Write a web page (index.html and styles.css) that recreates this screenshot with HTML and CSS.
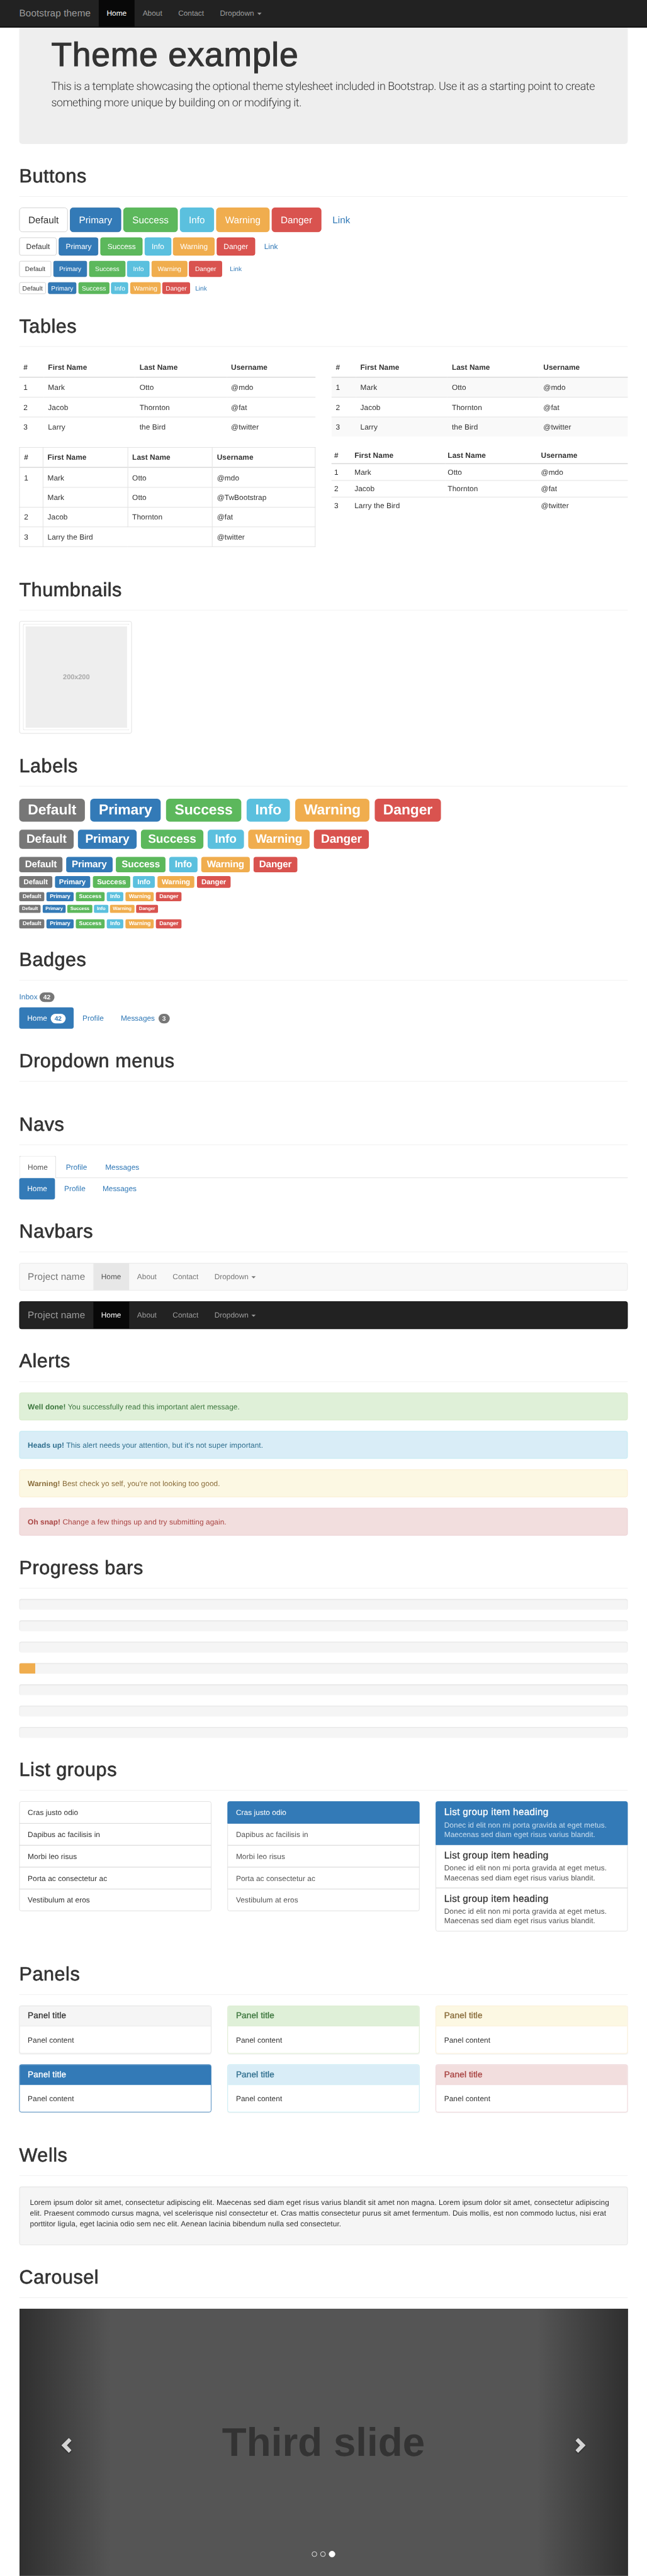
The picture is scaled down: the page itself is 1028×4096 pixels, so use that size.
FILE: index.html
```html
<!DOCTYPE html>
<html lang="en">
<head>
<meta charset="utf-8">
<title>Theme Template for Bootstrap</title>
<link rel="stylesheet" href="styles.css">
</head>
<body>
<div class="viewport">
<div class="page">
<nav class="navbar navbar-inverse navbar-fixed-top">
  <div class="container navbar-row">
    <a class="navbar-brand">Bootstrap theme</a>
    <ul class="navbar-nav">
      <li class="active"><a>Home</a></li>
      <li><a>About</a></li>
      <li><a>Contact</a></li>
      <li><a>Dropdown <span class="caret"></span></a></li>
    </ul>
  </div>
</nav>

<main class="container theme-showcase">
  <div class="jumbotron">
    <h1>Theme example</h1>
    <p>This is a template showcasing the optional theme stylesheet included in Bootstrap. Use it as a starting point to create<br>something more unique by building on or modifying it.</p>
  </div>

  <div class="page-header"><h1>Buttons</h1></div>
  <p class="buttons">
    <button class="btn btn-lg btn-default">Default</button>
    <button class="btn btn-lg btn-primary">Primary</button>
    <button class="btn btn-lg btn-success">Success</button>
    <button class="btn btn-lg btn-info">Info</button>
    <button class="btn btn-lg btn-warning">Warning</button>
    <button class="btn btn-lg btn-danger">Danger</button>
    <button class="btn btn-lg btn-link">Link</button>
  </p>
  <p class="buttons">
    <button class="btn btn-default">Default</button>
    <button class="btn btn-primary">Primary</button>
    <button class="btn btn-success">Success</button>
    <button class="btn btn-info">Info</button>
    <button class="btn btn-warning">Warning</button>
    <button class="btn btn-danger">Danger</button>
    <button class="btn btn-link">Link</button>
  </p>
  <p class="buttons">
    <button class="btn btn-sm btn-default">Default</button>
    <button class="btn btn-sm btn-primary">Primary</button>
    <button class="btn btn-sm btn-success">Success</button>
    <button class="btn btn-sm btn-info">Info</button>
    <button class="btn btn-sm btn-warning">Warning</button>
    <button class="btn btn-sm btn-danger">Danger</button>
    <button class="btn btn-sm btn-link">Link</button>
  </p>
  <p class="buttons">
    <button class="btn btn-xs btn-default">Default</button>
    <button class="btn btn-xs btn-primary">Primary</button>
    <button class="btn btn-xs btn-success">Success</button>
    <button class="btn btn-xs btn-info">Info</button>
    <button class="btn btn-xs btn-warning">Warning</button>
    <button class="btn btn-xs btn-danger">Danger</button>
    <button class="btn btn-xs btn-link">Link</button>
  </p>

  <div class="page-header"><h1>Tables</h1></div>
  <div class="row cols-2">
    <table class="table table-plain">
      <thead><tr><th>#</th><th>First Name</th><th>Last Name</th><th>Username</th></tr></thead>
      <tbody>
        <tr><td>1</td><td>Mark</td><td>Otto</td><td>@mdo</td></tr>
        <tr><td>2</td><td>Jacob</td><td>Thornton</td><td>@fat</td></tr>
        <tr><td>3</td><td>Larry</td><td>the Bird</td><td>@twitter</td></tr>
      </tbody>
    </table>
    <table class="table table-plain table-striped">
      <thead><tr><th>#</th><th>First Name</th><th>Last Name</th><th>Username</th></tr></thead>
      <tbody>
        <tr><td>1</td><td>Mark</td><td>Otto</td><td>@mdo</td></tr>
        <tr><td>2</td><td>Jacob</td><td>Thornton</td><td>@fat</td></tr>
        <tr><td>3</td><td>Larry</td><td>the Bird</td><td>@twitter</td></tr>
      </tbody>
    </table>
  </div>
  <div class="row cols-2">
    <table class="table table-bordered">
      <thead><tr><th>#</th><th>First Name</th><th>Last Name</th><th>Username</th></tr></thead>
      <tbody>
        <tr><td rowspan="2">1</td><td>Mark</td><td>Otto</td><td>@mdo</td></tr>
        <tr><td>Mark</td><td>Otto</td><td>@TwBootstrap</td></tr>
        <tr><td>2</td><td>Jacob</td><td>Thornton</td><td>@fat</td></tr>
        <tr><td>3</td><td colspan="2">Larry the Bird</td><td>@twitter</td></tr>
      </tbody>
    </table>
    <table class="table table-condensed">
      <thead><tr><th>#</th><th>First Name</th><th>Last Name</th><th>Username</th></tr></thead>
      <tbody>
        <tr><td>1</td><td>Mark</td><td>Otto</td><td>@mdo</td></tr>
        <tr><td>2</td><td>Jacob</td><td>Thornton</td><td>@fat</td></tr>
        <tr><td>3</td><td colspan="2">Larry the Bird</td><td>@twitter</td></tr>
      </tbody>
    </table>
  </div>

  <div class="page-header"><h1>Thumbnails</h1></div>
  <div class="img-thumbnail"><div class="thumb-frame"><div class="thumb-fill">200x200</div></div></div>

  <div class="page-header"><h1>Labels</h1></div>
  <h1 class="labels">
    <span class="label label-default">Default</span>
    <span class="label label-primary">Primary</span>
    <span class="label label-success">Success</span>
    <span class="label label-info">Info</span>
    <span class="label label-warning">Warning</span>
    <span class="label label-danger">Danger</span>
  </h1>
  <h2 class="labels">
    <span class="label label-default">Default</span>
    <span class="label label-primary">Primary</span>
    <span class="label label-success">Success</span>
    <span class="label label-info">Info</span>
    <span class="label label-warning">Warning</span>
    <span class="label label-danger">Danger</span>
  </h2>
  <h3 class="labels">
    <span class="label label-default">Default</span>
    <span class="label label-primary">Primary</span>
    <span class="label label-success">Success</span>
    <span class="label label-info">Info</span>
    <span class="label label-warning">Warning</span>
    <span class="label label-danger">Danger</span>
  </h3>
  <h4 class="labels">
    <span class="label label-default">Default</span>
    <span class="label label-primary">Primary</span>
    <span class="label label-success">Success</span>
    <span class="label label-info">Info</span>
    <span class="label label-warning">Warning</span>
    <span class="label label-danger">Danger</span>
  </h4>
  <h5 class="labels">
    <span class="label label-default">Default</span>
    <span class="label label-primary">Primary</span>
    <span class="label label-success">Success</span>
    <span class="label label-info">Info</span>
    <span class="label label-warning">Warning</span>
    <span class="label label-danger">Danger</span>
  </h5>
  <h6 class="labels">
    <span class="label label-default">Default</span>
    <span class="label label-primary">Primary</span>
    <span class="label label-success">Success</span>
    <span class="label label-info">Info</span>
    <span class="label label-warning">Warning</span>
    <span class="label label-danger">Danger</span>
  </h6>
  <p class="labels">
    <span class="label label-default">Default</span>
    <span class="label label-primary">Primary</span>
    <span class="label label-success">Success</span>
    <span class="label label-info">Info</span>
    <span class="label label-warning">Warning</span>
    <span class="label label-danger">Danger</span>
  </p>

  <div class="page-header"><h1>Badges</h1></div>
  <p class="inbox"><a>Inbox <span class="badge">42</span></a></p>
  <ul class="nav nav-pills">
    <li class="active"><a>Home <span class="badge">42</span></a></li>
    <li><a>Profile</a></li>
    <li><a>Messages <span class="badge">3</span></a></li>
  </ul>

  <div class="page-header"><h1>Dropdown menus</h1></div>
  <div class="theme-dropdown"></div>

  <div class="page-header"><h1>Navs</h1></div>
  <ul class="nav nav-tabs">
    <li class="active"><a>Home</a></li>
    <li><a>Profile</a></li>
    <li><a>Messages</a></li>
  </ul>
  <ul class="nav nav-pills">
    <li class="active"><a>Home</a></li>
    <li><a>Profile</a></li>
    <li><a>Messages</a></li>
  </ul>

  <div class="page-header"><h1>Navbars</h1></div>
  <nav class="navbar navbar-default navbar-row">
    <a class="navbar-brand">Project name</a>
    <ul class="navbar-nav">
      <li class="active"><a>Home</a></li>
      <li><a>About</a></li>
      <li><a>Contact</a></li>
      <li><a>Dropdown <span class="caret"></span></a></li>
    </ul>
  </nav>
  <nav class="navbar navbar-inverse navbar-row">
    <a class="navbar-brand">Project name</a>
    <ul class="navbar-nav">
      <li class="active"><a>Home</a></li>
      <li><a>About</a></li>
      <li><a>Contact</a></li>
      <li><a>Dropdown <span class="caret"></span></a></li>
    </ul>
  </nav>

  <div class="page-header"><h1>Alerts</h1></div>
  <div class="alert tone-success"><strong>Well done!</strong> You successfully read this important alert message.</div>
  <div class="alert tone-info"><strong>Heads up!</strong> This alert needs your attention, but it's not super important.</div>
  <div class="alert tone-warning"><strong>Warning!</strong> Best check yo self, you're not looking too good.</div>
  <div class="alert tone-danger"><strong>Oh snap!</strong> Change a few things up and try submitting again.</div>

  <div class="page-header"><h1>Progress bars</h1></div>
  <div class="progress"></div>
  <div class="progress"></div>
  <div class="progress"></div>
  <div class="progress"><div class="progress-bar" style="width: 2.6%"></div></div>
  <div class="progress"></div>
  <div class="progress"></div>
  <div class="progress"></div>

  <div class="page-header"><h1>List groups</h1></div>
  <div class="row cols-3">
    <ul class="list-group">
      <li>Cras justo odio</li>
      <li>Dapibus ac facilisis in</li>
      <li>Morbi leo risus</li>
      <li>Porta ac consectetur ac</li>
      <li>Vestibulum at eros</li>
    </ul>
    <ul class="list-group list-links">
      <li class="active">Cras justo odio</li>
      <li>Dapibus ac facilisis in</li>
      <li>Morbi leo risus</li>
      <li>Porta ac consectetur ac</li>
      <li>Vestibulum at eros</li>
    </ul>
    <ul class="list-group list-links">
      <li class="active"><h4>List group item heading</h4><p>Donec id elit non mi porta gravida at eget metus.<br>Maecenas sed diam eget risus varius blandit.</p></li>
      <li><h4>List group item heading</h4><p>Donec id elit non mi porta gravida at eget metus.<br>Maecenas sed diam eget risus varius blandit.</p></li>
      <li><h4>List group item heading</h4><p>Donec id elit non mi porta gravida at eget metus.<br>Maecenas sed diam eget risus varius blandit.</p></li>
    </ul>
  </div>

  <div class="page-header"><h1>Panels</h1></div>
  <div class="row cols-3">
    <section class="panel panel-default"><h3>Panel title</h3><div class="panel-body">Panel content</div></section>
    <section class="panel panel-success"><h3>Panel title</h3><div class="panel-body">Panel content</div></section>
    <section class="panel panel-warning"><h3>Panel title</h3><div class="panel-body">Panel content</div></section>
    <section class="panel panel-primary"><h3>Panel title</h3><div class="panel-body">Panel content</div></section>
    <section class="panel panel-info"><h3>Panel title</h3><div class="panel-body">Panel content</div></section>
    <section class="panel panel-danger"><h3>Panel title</h3><div class="panel-body">Panel content</div></section>
  </div>

  <div class="page-header"><h1>Wells</h1></div>
  <div class="well">
    <p>Lorem ipsum dolor sit amet, consectetur adipiscing elit. Maecenas sed diam eget risus varius blandit sit amet non magna. Lorem ipsum dolor sit amet, consectetur adipiscing<br>elit. Praesent commodo cursus magna, vel scelerisque nisl consectetur et. Cras mattis consectetur purus sit amet fermentum. Duis mollis, est non commodo luctus, nisi erat<br>porttitor ligula, eget lacinia odio sem nec elit. Aenean lacinia bibendum nulla sed consectetur.</p>
  </div>

  <div class="page-header"><h1>Carousel</h1></div>
  <div class="carousel">
    <div class="carousel-control control-prev">
      <svg class="chevron" viewBox="0 0 19 29"><path d="M14 0.3 19 5.2 10.4 14.2 19 23.4 14 28.4 0 14.2Z"/></svg>
    </div>
    <div class="carousel-caption">Third slide</div>
    <div class="carousel-control control-next">
      <svg class="chevron" viewBox="0 0 19 29"><path d="M5 0.3 0 5.2 8.6 14.2 0 23.4 5 28.4 19 14.2Z"/></svg>
    </div>
    <ol class="carousel-indicators"><li></li><li></li><li class="active"></li></ol>
  </div>
</main>
</div>
</div>
</body>
</html>
```
FILE: styles.css
```css
* { box-sizing: border-box; }
body { margin: 0; background: #fff; }
.viewport { width: 1028px; height: 4096px; overflow: hidden; }
.page {
  position: relative;
  width: 1212px;
  height: 4828px;
  overflow: hidden;
  transform: scale(0.84818, 0.84838);
  transform-origin: 0 0;
  font: 14px/20px "Liberation Sans", Arial, sans-serif;
  letter-spacing: 0.07px;
  text-rendering: geometricPrecision;
  color: #333;
}
.container { width: 1140px; margin: 0 auto; }
h1, h2, h3, h4, h5, h6 { font-weight: 500; margin: 20px 0 10px; }
h1 { font-size: 36px; line-height: 39px; }
h2 { font-size: 30px; line-height: 33px; }
h3 { font-size: 24px; line-height: 26px; }
h4, h5, h6 { margin: 10px 0; }
h4 { font-size: 18px; line-height: 19px; }
h5 { font-size: 14px; line-height: 15px; }
h6 { font-size: 12px; line-height: 13px; }
p { margin: 0 0 10px; }
ul, ol { list-style: none; margin: 0; padding: 0; }

/* Navbars */
.navbar { min-height: 50px; border: 1px solid transparent; border-radius: 4px; margin-bottom: 20px; }
.navbar-row { display: flex; }
.navbar-brand { padding: 15px; font-size: 18px; line-height: 20px; letter-spacing: 0.12px; }
.navbar-nav { display: flex; letter-spacing: 0; }
.navbar-nav a { display: block; height: 50px; padding: 15px; }
.navbar-fixed-top { position: absolute; top: 0; left: 0; right: 0; border-radius: 0; border-width: 0 0 1px; z-index: 10; }
.navbar-fixed-top .navbar-brand { padding-left: 0; }
.navbar-default { background: #f8f8f8; border-color: #e7e7e7; color: #777; }
.navbar-default .active { background: #e7e7e7; color: #555; }
.navbar-inverse { background: #222; border-color: #080808; color: #9d9d9d; }
.navbar-inverse .active { background: #080808; color: #fff; }
.caret { display: inline-block; margin-left: 2px; vertical-align: middle; border-top: 4px solid; border-left: 4px solid transparent; border-right: 4px solid transparent; }

.jumbotron { display: flow-root; height: 270px; background: #eee; border-radius: 6px; padding: 48px 60px; margin-bottom: 30px; }
.jumbotron h1 { font-size: 63px; line-height: 71px; margin-bottom: 9px; letter-spacing: 0.9px; -webkit-text-stroke: 1.3px #333; }
.jumbotron p { font: 300 21px/30px Roboto, "Liberation Sans", sans-serif; letter-spacing: -0.46px; white-space: nowrap; }

.page-header { margin: 40px 0 20px; padding-bottom: 9px; border-bottom: 1px solid #eee; }
.page-header h1 { letter-spacing: 0.65px; -webkit-text-stroke: 0.8px #333; }

/* Buttons */
.buttons { display: flex; gap: 3.9px; }
.btn { font: 14px/20px "Liberation Sans", Arial, sans-serif; padding: 6px 12px; border: 1px solid transparent; border-radius: 4px; color: #fff; background: none; letter-spacing: 0; text-rendering: geometricPrecision; }
.btn-lg { font-size: 18px; line-height: 24px; padding: 10px 16px; border-radius: 6px; }
.btn-sm { font-size: 12px; line-height: 18px; padding: 5px 10px; height: 30px; border-radius: 3px; }
.btn-xs { font-size: 12px; line-height: 18px; padding: 1px 5px; height: 22px; border-radius: 3px; }
.btn-default { color: #333; background: #fff; border-color: #ccc; }
.btn-primary { background: #337ab7; border-color: #2e6da4; }
.btn-success { background: #5cb85c; border-color: #4cae4c; }
.btn-info { background: #5bc0de; border-color: #46b8da; }
.btn-warning { background: #f0ad4e; border-color: #eea236; }
.btn-danger { background: #d9534f; border-color: #d43f3a; }
.btn-link { color: #337ab7; }

/* Grid rows */
.row { display: grid; column-gap: 30px; align-items: start; }
.cols-2 { grid-template-columns: 1fr 1fr; }
.cols-3 { grid-template-columns: 1fr 1fr 1fr; }

/* Tables */
.table { width: 100%; table-layout: fixed; border-collapse: collapse; margin-bottom: 20px; }
.table th, .table td { padding: 8px; text-align: left; vertical-align: top; border-top: 1px solid #ddd; }
.table th { border-top: 0; border-bottom: 2px solid #ddd; }
.table-plain th:nth-child(1) { width: 46px; }
.table-plain th:nth-child(2), .table-plain th:nth-child(3) { width: 171.4px; }
.table-striped tbody tr:nth-child(odd) { background: #f9f9f9; }
.table-bordered th, .table-bordered td { border: 1px solid #ddd; }
.table-bordered th { border-bottom-width: 2px; }
.table-bordered th:nth-child(1) { width: 44px; }
.table-bordered th:nth-child(2), .table-bordered th:nth-child(3) { width: 158.7px; }
.table-condensed th, .table-condensed td { padding: 5px; }
.table-condensed th:nth-child(1) { width: 38px; }
.table-condensed th:nth-child(2), .table-condensed th:nth-child(3) { width: 174.7px; }

/* Thumbnail */
.img-thumbnail { width: 211px; height: 211px; padding: 4px 4px 4px 6px; border: 1px solid #ddd; border-radius: 4px; }
.thumb-frame { width: 200px; height: 200px; padding: 4px; border: 1px solid #ddd; border-right-color: transparent; border-radius: 4px; }
.thumb-fill { height: 190px; display: flex; align-items: center; justify-content: center; background: #eee; color: #aaa; font-size: 13px; font-weight: bold; letter-spacing: -0.1px; }

/* Labels and badges */
.label { display: inline; padding: .2em .6em .3em; font-size: 75%; font-weight: bold; line-height: 1; color: #fff; border-radius: .25em; }
.labels { letter-spacing: -0.12px; }
h2.labels { letter-spacing: -0.18px; }
h3.labels { letter-spacing: -0.22px; }
h4.labels { letter-spacing: -0.05px; }
.label-default { background: #777; }
.label-primary { background: #337ab7; }
.label-success { background: #5cb85c; }
.label-info { background: #5bc0de; }
.label-warning { background: #f0ad4e; }
.label-danger { background: #d9534f; }
.badge { display: inline-block; min-width: 10px; padding: 3px 7px; font-size: 12px; font-weight: bold; line-height: 1; color: #fff; text-align: center; vertical-align: middle; background: #777; border-radius: 10px; }
.inbox { height: 20px; color: #337ab7; letter-spacing: 0; }

/* Navs */
.nav { display: flex; color: #337ab7; letter-spacing: 0; }
.nav a { display: block; height: 40px; padding: 10px 15px; }
.nav .badge { margin-left: 3px; }
.nav-pills { gap: 2px; }
.nav-pills a { border-radius: 4px; }
.nav-pills .active a { background: #337ab7; color: #fff; }
.nav-pills .active .badge { background: #fff; color: #337ab7; }
.nav-tabs { border-bottom: 1px solid #ddd; }
.nav-tabs li { margin: 0 2px -1px 0; }
.nav-tabs a { height: 42px; border: 1px solid transparent; border-radius: 4px 4px 0 0; }
.nav-tabs .active a { color: #555; background: #fff; border-color: #ddd #ddd #fff; }
.theme-dropdown { display: flow-root; }

/* Contextual colours */
.alert { padding: 15px; margin-bottom: 20px; border: 1px solid; border-radius: 4px; }
.tone-success { color: #3c763d; background: #dff0d8; border-color: #d6e9c6; }
.tone-info { color: #31708f; background: #d9edf7; border-color: #bce8f1; }
.tone-warning { color: #8a6d3b; background: #fcf8e3; border-color: #faebcc; }
.tone-danger { color: #a94442; background: #f2dede; border-color: #ebccd1; }

.progress { height: 20px; margin-bottom: 20px; overflow: hidden; background: #f5f5f5; border-radius: 4px; box-shadow: inset 0 1px 2px rgba(0,0,0,.1); }
.progress-bar { height: 100%; background: #f0ad4e; }

/* List groups */
.list-group { margin-bottom: 20px; }
.list-group li { padding: 10px 15px; margin-bottom: -1px; border: 1px solid #ddd; }
.list-group li:first-child { border-radius: 4px 4px 0 0; }
.list-group li:last-child { border-radius: 0 0 4px 4px; margin-bottom: 0; }
.list-group h4 { margin: 0 0 5px; color: #333; letter-spacing: 0.37px; -webkit-text-stroke: 0.4px; }
.list-group p { margin: 0; line-height: 18px; }
.list-links { color: #555; }
.list-group .active { position: relative; background: #337ab7; border-color: #337ab7; color: #fff; }
.list-group .active h4 { color: #fff; }
.list-group .active p { color: #c7ddef; }

/* Panels */
.panel { margin-bottom: 20px; border: 1px solid var(--edge); border-radius: 4px; box-shadow: 0 1px 1px rgba(0,0,0,.05); }
.panel h3 { margin: 0; padding: 10px 15px; font-size: 16px; line-height: 17px; letter-spacing: 0.15px; color: var(--ink); background: var(--fill); border-bottom: 1px solid var(--edge); border-radius: 3px 3px 0 0; -webkit-text-stroke: 0.4px; }
.panel-body { padding: 15px; }
.panel-default { --edge: #ddd; --fill: #f5f5f5; --ink: #333; }
.panel-primary { --edge: #337ab7; --fill: #337ab7; --ink: #fff; }
.panel-success { --edge: #d6e9c6; --fill: #dff0d8; --ink: #3c763d; }
.panel-info { --edge: #bce8f1; --fill: #d9edf7; --ink: #31708f; }
.panel-warning { --edge: #faebcc; --fill: #fcf8e3; --ink: #8a6d3b; }
.panel-danger { --edge: #ebccd1; --fill: #f2dede; --ink: #a94442; }

.well { height: 110px; padding: 19px; margin-bottom: 20px; background: #f5f5f5; border: 1px solid #e3e3e3; border-radius: 4px; box-shadow: inset 0 1px 1px rgba(0,0,0,.05); }
.well p { white-space: nowrap; letter-spacing: 0.084px; }

/* Carousel */
.carousel { position: relative; display: flex; height: 500px; background: #555; }
.carousel-control { width: 171px; display: flex; align-items: center; justify-content: center; }
.control-prev { padding: 13px 0 0 5px; background: linear-gradient(to right, rgba(0,0,0,.45), rgba(0,0,0,0)); }
.control-next { padding: 13px 6px 0 0; background: linear-gradient(to left, rgba(0,0,0,.45), rgba(0,0,0,0)); }
.carousel-caption { flex: 1; display: flex; align-items: center; justify-content: center; font-size: 75px; font-weight: bold; line-height: 1; color: #333; }
.chevron { width: 19px; height: 29px; fill: #d5d5d5; filter: drop-shadow(0 1px 1px rgba(0,0,0,.6)); }
.carousel-indicators { position: absolute; left: 0; right: 0; bottom: 34px; display: flex; gap: 6px; align-items: center; justify-content: center; }
.carousel-indicators li { width: 10px; height: 10px; border: 1px solid #fff; border-radius: 50%; }
.carousel-indicators .active { width: 12px; height: 12px; background: #fff; }
```
